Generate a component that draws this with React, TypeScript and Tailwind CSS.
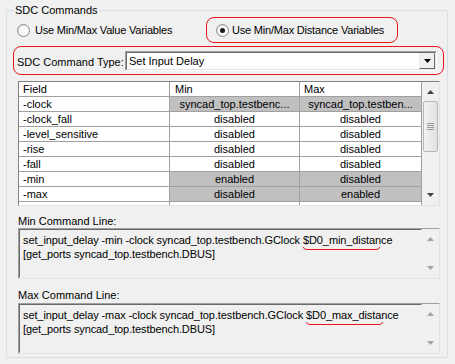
import React from "react";

const FONT = { fontFamily: '"Liberation Sans", Arial, sans-serif' };

function Radio({ checked }: { checked?: boolean }) {
  return (
    <span className="relative inline-flex h-[13px] w-[13px] shrink-0 items-center justify-center rounded-full border border-[#8d8d8d] bg-gradient-to-br from-[#dcdcdc] to-[#ffffff]">
      <span className="h-[9px] w-[9px] rounded-full bg-gradient-to-br from-[#f4f4f4] to-[#ffffff] flex items-center justify-center">
        {checked && <span className="h-[5px] w-[5px] rounded-full bg-[#1a1a1a]" />}
      </span>
    </span>
  );
}

function UpArrow({ color }: { color: string }) {
  return (
    <svg width="7" height="4" viewBox="0 0 7 4">
      <path d="M3.5 0 L7 4 L0 4 Z" fill={color} />
    </svg>
  );
}
function DownArrow({ color }: { color: string }) {
  return (
    <svg width="7" height="4" viewBox="0 0 7 4">
      <path d="M0 0 L7 0 L3.5 4 Z" fill={color} />
    </svg>
  );
}

type Row = { f: string; min: string; max: string; gmin?: boolean; gmax?: boolean };
const rows: Row[] = [
  { f: "-clock", min: "syncad_top.testbenc...", max: "syncad_top.testben...", gmin: true, gmax: true },
  { f: "-clock_fall", min: "disabled", max: "disabled" },
  { f: "-level_sensitive", min: "disabled", max: "disabled" },
  { f: "-rise", min: "disabled", max: "disabled" },
  { f: "-fall", min: "disabled", max: "disabled" },
  { f: "-min", min: "enabled", max: "disabled", gmin: true, gmax: true },
  { f: "-max", min: "disabled", max: "enabled", gmin: true, gmax: true },
  { f: "", min: "", max: "" },
];

function Squiggle() {
  return (
    <svg
      className="absolute left-[-1px] top-[12px]"
      width="80"
      height="6"
      viewBox="0 0 80 6"
      fill="none"
    >
      <path d="M1 1 Q2 3.5 5 3.5 L74 3.5 Q77 3.5 78 1" stroke="#e8141c" strokeWidth="1" />
    </svg>
  );
}

function CommandBox({ kind }: { kind: "min" | "max" }) {
  return (
    <div className="flex h-[51px] w-[422px] border border-t-[#a0a0a0] border-l-[#a0a0a0] border-b-[#e3e3e3] border-r-[#e3e3e3] bg-[#f0f0f0]">
      <div className="flex-1 border border-t-[#696969] border-l-[#696969] border-b-[#f0f0f0] border-r-[#f0f0f0] pl-[3px] pt-[3px] text-[11px] leading-[14px] tracking-[-0.1px] text-black">
        <div>
          set_input_delay -{kind} -clock syncad_top.testbench.GClock{" "}
          <span className="relative">
            $D0_{kind}_distance
            <Squiggle />
          </span>
        </div>
        <div>[get_ports syncad_top.testbench.DBUS]</div>
      </div>
      <div className="flex w-[17px] flex-col items-center justify-between py-[8px]">
        <UpArrow color="#a3a3a3" />
        <DownArrow color="#a3a3a3" />
      </div>
    </div>
  );
}

export default function App() {
  return (
    <div className="h-[364px] w-[455px] bg-[#f0f0f0] pt-[10px] pl-[6px] text-[11px] text-black" style={FONT}>
      <div className="relative h-[348px] w-[442px] rounded-[2px] border border-[#d5dfe5]">
        <span className="absolute left-[7px] top-[-8px] bg-[#f0f0f0] px-[1px] leading-[14px]">SDC Commands</span>

        {/* radio row */}
        <div className="mt-[6px] flex h-[26px] items-center">
          <div className="ml-[10px] flex w-[189px] items-center gap-[5px]">
            <Radio />
            <span className="tracking-[-0.2px]">Use Min/Max Value Variables</span>
          </div>
          <div className="flex h-[26px] w-[192px] items-center gap-[3px] rounded-[8px] border border-[#e8141c] pl-[9px]">
            <Radio checked />
            <span className="tracking-[-0.2px]">Use Min/Max Distance Variables</span>
          </div>
        </div>

        {/* command type row */}
        <div className="ml-[6px] mt-[3px] flex h-[29px] w-[431px] items-start rounded-[8px] border border-[#e8141c] pl-[3px] pt-[4px]">
          <span className="w-[108px] pt-[3px]">SDC Command Type:</span>
          <div className="flex h-[20px] w-[312px] border border-t-[#a0a0a0] border-l-[#a0a0a0] border-b-white border-r-white bg-white">
            <div className="flex flex-1 border border-t-[#696969] border-l-[#696969] border-b-[#e3e3e3] border-r-[#e3e3e3]">
              <span className="flex-1 pl-[2px] leading-[16px]">Set Input Delay</span>
              <div className="flex h-[16px] w-[16px] items-center justify-center border border-t-[#f0f0f0] border-l-[#f0f0f0] border-b-[#696969] border-r-[#696969] bg-[#f0f0f0]">
                <svg width="7" height="4" viewBox="0 0 7 4">
                  <path d="M0 0 L7 0 L3.5 4 Z" fill="#000" />
                </svg>
              </div>
            </div>
          </div>
        </div>

        {/* table */}
        <div className="ml-[11px] mt-[6px] flex h-[125px] w-[422px] overflow-hidden border border-t-[#828282] border-l-[#828282] border-b-[#e3e3e3] border-r-[#e3e3e3] bg-white">
          <div className="w-[403px] overflow-hidden">
            <div className="flex h-[15px] border-b border-[#a0a0a0] leading-[14px]">
              <div className="w-[151px] border-r border-[#a0a0a0] pl-[4px]">Field</div>
              <div className="w-[130px] border-r border-[#a0a0a0] pl-[5px]">Min</div>
              <div className="w-[122px] border-r border-[#a0a0a0] pl-[4px]">Max</div>
            </div>
            {rows.map((r, i) => (
              <div key={i} className="flex h-[15px] border-b border-[#a0a0a0] leading-[14px]">
                <div className="w-[151px] border-r border-[#a0a0a0] pl-[4px]">{r.f}</div>
                <div className={`w-[130px] border-r border-[#a0a0a0] text-center ${r.gmin ? "bg-[#c0c0c0]" : ""}`}>{r.min}</div>
                <div className={`w-[122px] border-r border-[#a0a0a0] text-center ${r.gmax ? "bg-[#c0c0c0]" : ""}`}>{r.max}</div>
              </div>
            ))}
          </div>
          <div className="flex w-[17px] flex-col items-center bg-[#f0f0f0]">
            <div className="flex h-[17px] items-center justify-center pt-[2px]">
              <UpArrow color="#404040" />
            </div>
            <div className="mt-[2px] flex h-[51px] w-[15px] flex-col items-center justify-center gap-[1px] rounded-[2px] border border-[#b8b8b8] bg-gradient-to-r from-[#f2f2f2] to-[#e2e2e2]">
              <div className="h-[1px] w-[7px] bg-[#999]" />
              <div className="h-[1px] w-[7px] bg-[#999]" />
              <div className="h-[1px] w-[7px] bg-[#999]" />
              <div className="h-[1px] w-[7px] bg-[#999]" />
            </div>
            <div className="flex-1" />
            <div className="flex h-[17px] items-center justify-center pb-[4px]">
              <DownArrow color="#404040" />
            </div>
          </div>
        </div>

        {/* min command line */}
        <div className="ml-[11px] mt-[8px] h-[14px] leading-[14px]">Min Command Line:</div>
        <div className="ml-[11px]">
          <CommandBox kind="min" />
        </div>

        <div className="ml-[11px] mt-[9px] h-[15px] leading-[14px]">Max Command Line:</div>
        <div className="ml-[11px]">
          <CommandBox kind="max" />
        </div>
      </div>
    </div>
  );
}
